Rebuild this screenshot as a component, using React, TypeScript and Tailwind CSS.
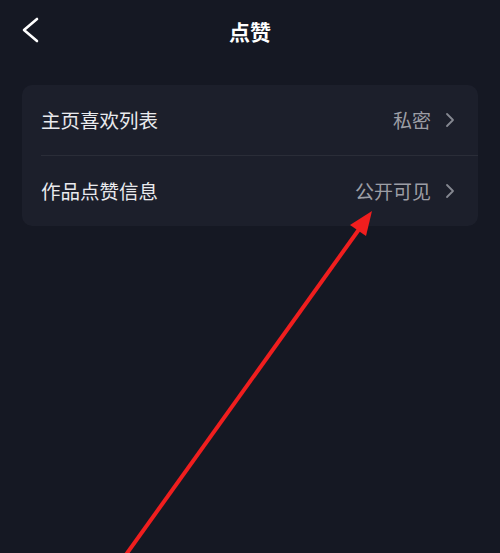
const rows = [
  { label: '主页喜欢列表', value: '私密' },
  { label: '作品点赞信息', value: '公开可见' },
];

export default function App() {
  return (
    <div
      className="relative w-[500px] h-[553px] overflow-hidden bg-[#151823]"
      style={{ fontFamily: '"Noto Sans CJK SC", "Noto Sans", sans-serif' }}
    >
      {/* Header */}
      <div className="relative flex items-center justify-center h-[62px]">
        <svg className="absolute left-[20px] top-[16px]" width="20" height="28" viewBox="0 0 20 28" fill="none">
          <polyline points="17,3 4,14 17,25" stroke="white" strokeWidth="2.6" strokeLinecap="round" strokeLinejoin="round" />
        </svg>
        <h1 className="text-[21px] font-bold text-white leading-none">点赞</h1>
      </div>

      {/* Settings card */}
      <div className="mx-[22px] mt-[23px] rounded-[10px] bg-[#1c1f2b]">
        {rows.map((row, i) => (
          <div key={row.label} className={i > 0 ? 'ml-[19px] border-t border-[#2a2d38]' : 'ml-[19px]'}>
            <div className="flex items-center justify-between h-[70px] pr-[23px]">
              <span className="text-[19.5px] text-[#e9eaee]">{row.label}</span>
              <div className="flex items-center gap-[14px]">
                <span className="text-[19px] text-[#9c9ea5]">{row.value}</span>
                <svg width="10" height="16" viewBox="0 0 10 16" fill="none">
                  <polyline points="2,2 8,8 2,14" stroke="#858891" strokeWidth="1.8" strokeLinecap="round" strokeLinejoin="round" />
                </svg>
              </div>
            </div>
          </div>
        ))}
      </div>

      {/* Annotation arrow */}
      <svg className="absolute inset-0 pointer-events-none" width="500" height="553" viewBox="0 0 500 553">
        <line x1="120" y1="563" x2="360" y2="228" stroke="#f01e1e" strokeWidth="4" />
        <polygon points="372,211 366,236 350,225" fill="#f01e1e" />
      </svg>
    </div>
  );
}
